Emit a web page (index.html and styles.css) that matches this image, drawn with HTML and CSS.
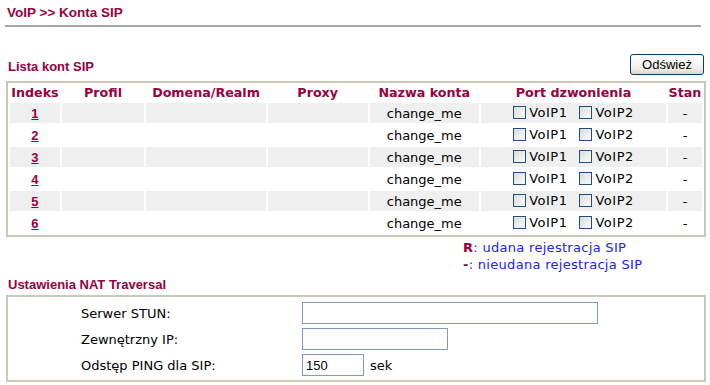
FILE: index.html
```html
<!DOCTYPE html>
<html lang="pl">

<head>
  <meta charset="UTF-8">
  <title>VoIP &gt;&gt; Konta SIP</title>
  <link rel="stylesheet" href="styles.css">
</head>

<body>
  <div class="page">
    <h1 class="page-title">VoIP &gt;&gt; Konta SIP</h1>
    <hr class="title-rule">

    <!-- SIP account list -->
    <div class="section-head">
      <h2 class="list-title">Lista kont SIP</h2>
      <button type="button" class="refresh-btn">Odśwież</button>
    </div>
    <table class="sip-list">
      <thead>
        <tr>
          <th class="col-idx">Indeks</th>
          <th class="col-profile">Profil</th>
          <th class="col-domain">Domena/Realm</th>
          <th class="col-proxy">Proxy</th>
          <th class="col-account">Nazwa konta</th>
          <th class="col-port">Port dzwonienia</th>
          <th class="col-state">Stan</th>
        </tr>
      </thead>
      <tbody>
        <tr>
          <td><a href="#">1</a></td><td></td><td></td><td></td>
          <td>change_me</td>
          <td><label class="port"><input type="checkbox">VoIP1</label><label class="port"><input type="checkbox">VoIP2</label></td>
          <td>-</td>
        </tr>
        <tr>
          <td><a href="#">2</a></td><td></td><td></td><td></td>
          <td>change_me</td>
          <td><label class="port"><input type="checkbox">VoIP1</label><label class="port"><input type="checkbox">VoIP2</label></td>
          <td>-</td>
        </tr>
        <tr>
          <td><a href="#">3</a></td><td></td><td></td><td></td>
          <td>change_me</td>
          <td><label class="port"><input type="checkbox">VoIP1</label><label class="port"><input type="checkbox">VoIP2</label></td>
          <td>-</td>
        </tr>
        <tr>
          <td><a href="#">4</a></td><td></td><td></td><td></td>
          <td>change_me</td>
          <td><label class="port"><input type="checkbox">VoIP1</label><label class="port"><input type="checkbox">VoIP2</label></td>
          <td>-</td>
        </tr>
        <tr>
          <td><a href="#">5</a></td><td></td><td></td><td></td>
          <td>change_me</td>
          <td><label class="port"><input type="checkbox">VoIP1</label><label class="port"><input type="checkbox">VoIP2</label></td>
          <td>-</td>
        </tr>
        <tr>
          <td><a href="#">6</a></td><td></td><td></td><td></td>
          <td>change_me</td>
          <td><label class="port"><input type="checkbox">VoIP1</label><label class="port"><input type="checkbox">VoIP2</label></td>
          <td>-</td>
        </tr>
      </tbody>
    </table>

    <div class="legend">
      <div><span class="mark">R</span>: udana rejestracja SIP</div>
      <div><span class="mark">-</span>: nieudana rejestracja SIP</div>
    </div>

    <!-- NAT traversal -->
    <h2 class="nat-title">Ustawienia NAT Traversal</h2>
    <div class="nat-box">
      <label for="stun">Serwer STUN:</label>
      <div><input type="text" id="stun" class="field field-long"></div>
      <label for="extip">Zewnętrzny IP:</label>
      <div><input type="text" id="extip" class="field field-mid"></div>
      <label for="ping">Odstęp PING dla SIP:</label>
      <div><input type="text" id="ping" class="field field-short" value="150"><span class="unit">sek</span></div>
    </div>
  </div>
</body>

</html>
```

FILE: styles.css
```css
* {
  margin: 0;
  padding: 0;
  box-sizing: border-box;
}

body {
  background-color: #fff;
  font-family: 'DejaVu Sans', Verdana, sans-serif;
  font-size: 13px;
  color: #000;
}

.page {
  width: 710px;
  padding: 0 4px 0 6px;
}

.page-title {
  font-family: 'Liberation Sans', Tahoma, sans-serif;
  font-size: 13.5px;
  font-weight: bold;
  color: #990040;
  line-height: 14px;
  padding: 6px 0 0 1px;
}

.title-rule {
  border: none;
  border-top: 2px solid #a6a6a6;
  margin: 5px 0 0 -1px;
  width: 696px;
}

.section-head {
  display: flex;
  justify-content: space-between;
  align-items: flex-end;
  margin-top: 27px;
  padding-right: 2px;
}

.list-title {
  font-family: 'Liberation Sans', Tahoma, sans-serif;
  font-size: 13px;
  font-weight: bold;
  color: #990040;
  line-height: 14px;
  padding: 0 0 7px 2px;
}

.refresh-btn {
  width: 74px;
  height: 21px;
  font-family: 'Liberation Sans', Tahoma, sans-serif;
  font-size: 13px;
  color: #000;
  border: 1px solid #003c74;
  border-radius: 3px;
  background: linear-gradient(#ffffff, #f0efe9 70%, #dcd8c8);
  margin-bottom: 6px;
}

.sip-list {
  width: 700px;
  border: 2px solid #ccc8b8;
  border-spacing: 2px;
}

.sip-list th {
  font-size: 12.7px;
  font-weight: bold;
  color: #990040;
  height: 16px;
  line-height: 16px;
  text-align: center;
  white-space: nowrap;
}

.sip-list td {
  height: 20px;
  text-align: center;
  white-space: nowrap;
}

.sip-list tbody tr:nth-child(odd) td {
  background-color: #efefef;
}

.col-idx { width: 50px; }
.col-profile { width: 84px; }
.col-domain { width: 120px; }
.col-proxy { width: 102px; }
.col-account { width: 110px; }
.col-port { width: 187px; }
.col-state { width: 34px; }

.sip-list a {
  color: #990040;
  font-weight: bold;
  font-family: 'Liberation Sans', Tahoma, sans-serif;
  font-size: 13px;
}

.port {
  display: inline-flex;
  align-items: center;
  margin: 0 6px;
  letter-spacing: 0.5px;
}

.port input {
  appearance: none;
  width: 13px;
  height: 13px;
  border: 1px solid #1c5180;
  background: linear-gradient(135deg, #dcdcd7, #fbfbf9);
  margin-right: 3px;
}

.legend {
  margin: 2px 0 0 457px;
  color: #2020ff;
  line-height: 17px;
  letter-spacing: 0.3px;
}

.legend .mark {
  color: #990040;
  font-weight: bold;
}

.nat-title {
  font-family: 'Liberation Sans', Tahoma, sans-serif;
  font-size: 13px;
  font-weight: bold;
  color: #990040;
  line-height: 14px;
  padding: 0 0 3px 2px;
  margin-top: 5px;
}

.nat-box {
  display: grid;
  grid-template-columns: 221px auto;
  row-gap: 4px;
  align-items: center;
  width: 700px;
  border: 2px solid #ccc8b8;
  padding: 5px 0 4px 73px;
}

.field {
  height: 22px;
  border: 1px solid #7f9db9;
  font-family: 'Liberation Sans', Tahoma, sans-serif;
  font-size: 13px;
  padding: 0 3px;
  vertical-align: middle;
}

.field-long { width: 296px; }
.field-mid { width: 146px; }
.field-short { width: 62px; }

.unit {
  margin-left: 6px;
  vertical-align: middle;
}
```
